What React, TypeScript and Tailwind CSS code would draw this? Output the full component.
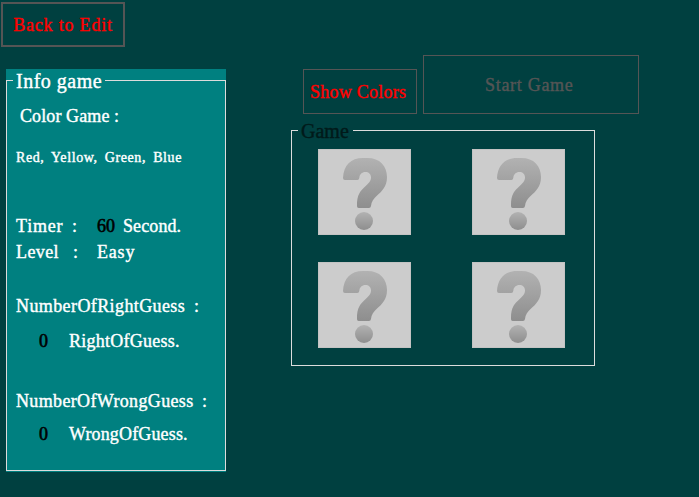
import React from "react";

function Row({ className, children }: { className: string; children: React.ReactNode }) {
  return <div className={`flex h-6 items-center whitespace-pre ${className}`}>{children}</div>;
}

function Card({ id }: { id: string }) {
  return (
    <button className="h-[86px] w-[93px] border border-[#c3c3c3] bg-[#cccccc]">
      <svg viewBox="3 3 273 252" className="block h-[84px] w-[91px]">
        <defs>
          <linearGradient id={`mark-${id}`} x1="0" y1="0" x2="0" y2="1">
            <stop offset="0" stopColor="#b2b2b2" />
            <stop offset="1" stopColor="#8e8e8e" />
          </linearGradient>
        </defs>
        <path
          fill={`url(#mark-${id})`}
          d="M75 87C77 49 98 27 135 27H148C186 27 207 51 207 84C207 113 191 127 178 139C167 149 160 158 159 171Q158 177 153 177H122Q117 177 117 172C116 136 128 125 143 111C155 100 159 95 159 85C159 75 152 69 142 69C132 69 125 76 124 86Q123 93 118 93H81Q75 93 75 87Z"
        />
        <circle cx="138" cy="216" r="27" fill={`url(#mark-${id})`} />
      </svg>
    </button>
  );
}

export default function App() {
  return (
    <div className="flex h-[497px] w-[699px] overflow-hidden bg-[#004040] font-['Liberation_Serif',serif] text-[18px] leading-6 text-white [-webkit-text-stroke:0.4px_currentColor]">
      <div className="w-[291px] shrink-0 pt-[2px]">
        <button className="ml-px flex h-[45px] w-[124px] items-center justify-center border-2 border-[#555555] text-[#ff0000]">
          <span className="whitespace-nowrap tracking-[0.8px]">Back to Edit</span>
        </button>
        <div className="ml-[6px] mt-[22px] h-[403px] w-[220px] bg-[#008080]">
          <fieldset className="h-[402px] border border-[#dcdcdc]">
            <legend className="ml-[6px] h-[23px] w-[92px] whitespace-nowrap pl-[3px] text-[20px] leading-[25px] tracking-[0.5px]">
              Info game
            </legend>
            <div className="pl-[9px]">
              <Row className="mt-3 pl-1 tracking-[0.1px]">Color Game :</Row>
              <Row className="mt-[18px] text-[14px] tracking-[0.6px] [word-spacing:3px]">Red, Yellow, Green, Blue</Row>
              <Row className="mt-11">
                <span className="w-14 tracking-[0.8px]">Timer</span>
                <span className="w-[25px]">:</span>
                <span className="w-[26px] text-black [-webkit-text-stroke:0.6px_currentColor]">60</span>
                <span className="tracking-[0.1px]">Second.</span>
              </Row>
              <Row className="mt-0.5">
                <span className="w-[57px] tracking-[0.4px]">Level</span>
                <span className="w-6">:</span>
                <span className="tracking-[0.8px]">Easy</span>
              </Row>
              <Row className="mt-[30px]">
                <span className="w-[178px] tracking-[0.4px]">NumberOfRightGuess</span>:
              </Row>
              <Row className="mt-[11px]">
                <span className="ml-[23px] w-[30px] text-black [-webkit-text-stroke:0.6px_currentColor]">0</span>
                <span className="tracking-[0.25px]">RightOfGuess.</span>
              </Row>
              <Row className="mt-9">
                <span className="w-[186px] tracking-[0.35px]">NumberOfWrongGuess</span>:
              </Row>
              <Row className="mt-[9px]">
                <span className="ml-[23px] w-[30px] text-black [-webkit-text-stroke:0.6px_currentColor]">0</span>
                <span className="tracking-[0.15px]">WrongOfGuess.</span>
              </Row>
            </div>
          </fieldset>
        </div>
      </div>
      <div className="pt-[55px]">
        <div className="ml-3 flex h-[59px] items-end gap-[6px]">
          <button className="flex h-[45px] w-[114px] items-center border border-[#555555] pl-[6px] text-[#ff0000]">
            <span className="whitespace-nowrap tracking-[0.25px]">Show Colors</span>
          </button>
          <button disabled className="flex h-[59px] w-[216px] items-center border border-[#555555] pl-[61px] text-[#555555]">
            <span className="whitespace-nowrap tracking-[0.7px]">Start Game</span>
          </button>
        </div>
        <fieldset className="mt-[5px] h-[247px] w-[304px] border border-[#dcdcdc]">
          <legend className="ml-[6px] h-[23px] w-[55px] whitespace-nowrap pl-[3px] text-[20px] leading-[25px] text-[#001a1a]">Game</legend>
          <div className="grid grid-cols-[93px_93px] gap-x-[61px] gap-y-[27px] pl-[26px] pt-[7px]">
            <Card id="a" />
            <Card id="b" />
            <Card id="c" />
            <Card id="d" />
          </div>
        </fieldset>
      </div>
    </div>
  );
}
